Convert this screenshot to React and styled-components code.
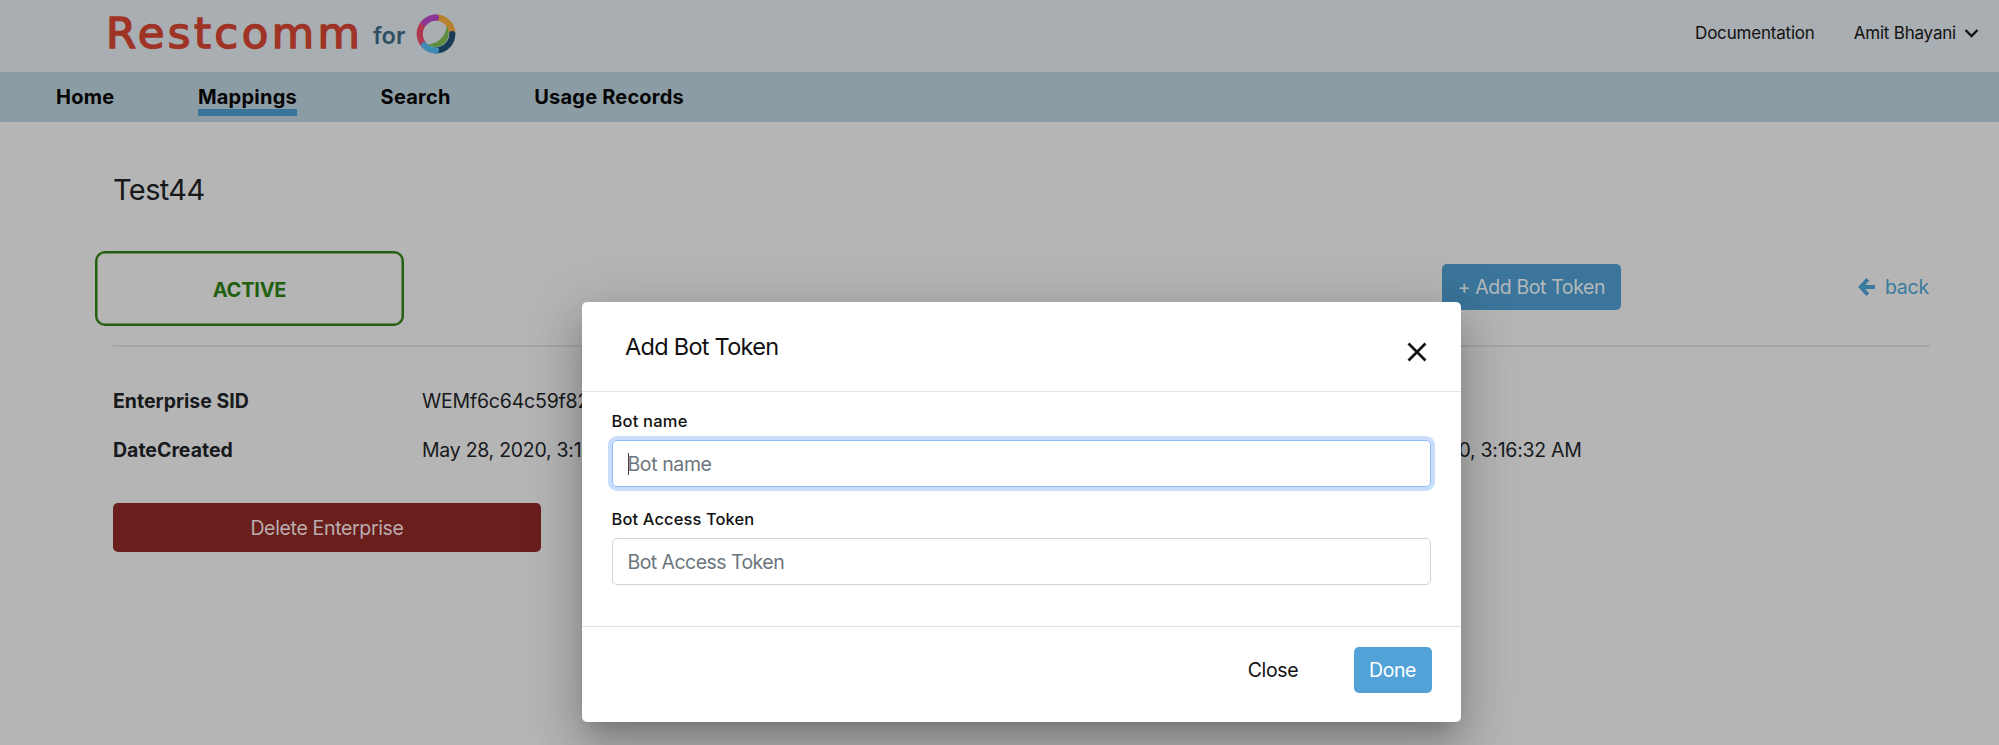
import React from 'react';
import styled, { createGlobalStyle } from 'styled-components';

const GlobalStyle = createGlobalStyle`
  * { box-sizing: border-box; }
  body { margin: 0; background: #b5b5b5; overflow: hidden; }
  button, input { font: inherit; margin: 0; }
`;

const Page = styled.div`
  position: relative;
  height: 745px;
  overflow: hidden;
  background: #b5b5b5;
  color: #17191c;
  font-family: Inter, "Liberation Sans", sans-serif;
  font-size: 19.5px;
`;

const Text = styled.span`
  white-space: nowrap;
  letter-spacing: ${(p) => p.$track || 0}px;
`;

const Header = styled.header`
  height: 72px;
  background: #a9aeb2;
  display: flex;
  align-items: flex-start;
  padding: 0 20px 0 106px;
`;

const Wordmark = styled.div`
  width: 267px;
  padding-top: 7px;
  font-family: "DejaVu Sans", sans-serif;
  font-size: 43.5px;
  line-height: 52px;
  letter-spacing: 3.4px;
  color: #9f3426;
  -webkit-text-stroke: 1.5px #9f3426;
  white-space: nowrap;
`;

const For = styled.div`
  width: 43px;
  padding-top: 22px;
  font-size: 23.5px;
  line-height: 28px;
  font-weight: 600;
  color: #2f5063;
`;

const Ring = styled.svg`
  width: 40px;
  height: 40px;
  margin-top: 14px;
`;

const UserLinks = styled.div`
  margin-left: auto;
  padding-top: 22px;
  display: flex;
  gap: 39px;
  font-size: 17px;
  line-height: 22px;
  color: #111;
`;

const User = styled.span`
  display: flex;
  align-items: center;
  gap: 8px;
`;

const Nav = styled.nav`
  height: 50px;
  background: #8c9ca4;
  display: flex;
  padding: 12px 0 0 56px;
  gap: 83.5px;
  font-size: 20px;
  font-weight: 700;
  color: #050505;
`;

const NavItem = styled.a`
  height: 32px;
  line-height: 26px;
  border-bottom: 7px solid ${(p) => (p.$active ? '#39759b' : 'transparent')};
`;

const Content = styled.main`
  padding: 50px 69px 0 113px;
`;

const Title = styled.h1`
  margin: 0;
  font-size: 29px;
  font-weight: 400;
  line-height: 36px;
`;

const Toolbar = styled.div`
  display: flex;
  align-items: flex-start;
  height: 137px;
  margin-left: -18px;
  padding: 43px 1px 0 0;
`;

const Status = styled.div`
  width: 309px;
  height: 75px;
  padding-top: 2px;
  border: 2.5px solid #22600f;
  border-radius: 10px;
  box-shadow: inset 0 0 0 0.5px #22600f;
  color: #22600f;
  font-size: 20px;
  font-weight: 700;
  display: flex;
  align-items: center;
  justify-content: center;
`;

const Button = styled.button`
  width: ${(p) => p.$w}px;
  height: ${(p) => p.$h || 46}px;
  padding: 0;
  border: 0;
  border-radius: 5px;
  background: ${(p) => p.$bg || 'transparent'};
  color: ${(p) => p.$fg};
`;

const AddSlot = styled.div`
  margin: 13px 0 0 auto;
`;

const Back = styled.a`
  display: flex;
  align-items: center;
  gap: 10px;
  height: 46px;
  margin: 13px 0 0 237px;
  color: #397a9f;
`;

const Details = styled.dl`
  margin: 0;
  padding-top: 30px;
  border-top: 2px solid #a5a6a7;
`;

const Row = styled.div`
  display: grid;
  grid-template-columns: 309px 924px auto;
  height: 49px;
  line-height: 49px;
`;

const Term = styled.dt`
  font-weight: 700;
`;

const Value = styled.dd`
  margin: 0;
`;

const DeleteSlot = styled.div`
  padding-top: 28px;
`;

const Dialog = styled.section`
  position: absolute;
  left: 582px;
  top: 302px;
  width: 879px;
  height: 420px;
  border-radius: 5px;
  background: #fff;
  color: #111;
  box-shadow: 0 13px 19px -9px rgba(0, 0, 0, 0.2), 0 29px 46px 4px rgba(0, 0, 0, 0.14),
    0 11px 56px 10px rgba(0, 0, 0, 0.12);
`;

const DialogHeader = styled.div`
  height: 90px;
  padding: 29px 34px 0 43px;
  border-bottom: 1.5px solid #e3e5e8;
  display: flex;
  justify-content: space-between;
`;

const DialogTitle = styled.h2`
  margin: 0;
  font-size: 23.5px;
  font-weight: 400;
  line-height: 32px;
`;

const CloseIcon = styled.svg`
  width: 20px;
  height: 20px;
  margin-top: 11px;
`;

const DialogBody = styled.div`
  height: 234px;
  padding: 18px 30px 0 29.5px;
`;

const Field = styled.label`
  display: block;
  height: 98px;
  font-size: 16.5px;
  font-weight: 500;
  line-height: 22px;
`;

const Input = styled.div`
  display: flex;
  align-items: center;
  height: 47px;
  margin-top: 8px;
  padding-left: 15px;
  border: 1.5px solid ${(p) => (p.$focus ? '#8fbcf8' : '#ced4da')};
  border-radius: 5px;
  box-shadow: ${(p) => (p.$focus ? '0 0 0 4px #c9ddfd' : 'none')};
  color: #6c757d;
  font-size: 19.5px;
  font-weight: 400;
`;

const Caret = styled.i`
  width: 1px;
  height: 22px;
  margin-right: -1px;
  background: #444;
`;

const DialogFooter = styled.div`
  height: 96px;
  padding: 20px 29.5px 0 0;
  border-top: 1.5px solid #dee0e3;
  display: flex;
  justify-content: flex-end;
  gap: 40px;
`;

export default function App() {
  return (
    <Page>
      <GlobalStyle />
      <Header>
        <Wordmark>Restcomm</Wordmark>
        <For>for</For>
        <Ring viewBox="0 0 40 40" fill="none" strokeWidth="6.2" strokeLinecap="round">
          <path d="M31 10C36 22 30 33 19 33C16 33 13.5 32 11.5 30.5C22 30 30.5 22 31 10Z" fill="#5e8d3e" />
          <path d="M20 3.7A16.3 16.3 0 0 1 36.3 19" stroke="#b7812f" />
          <path d="M8 31A16.3 16.3 0 0 1 8.5 8.5" stroke="#b0384f" />
          <path d="M8.5 8.5A16.3 16.3 0 0 1 20 3.7" stroke="#8b3697" />
          <path d="M36.3 20A16.3 16.3 0 0 1 20 36.3" stroke="#183c56" />
          <path d="M8.2 31.3A16.3 16.3 0 0 0 20 36.3" stroke="#3c8bb2" />
        </Ring>
        <UserLinks>
          <Text $track={-0.2}>Documentation</Text>
          <User>
            <Text $track={-0.2}>Amit Bhayani</Text>
            <svg width="15" height="10" viewBox="0 0 15 10" fill="none" stroke="#111" strokeWidth="2.3">
              <path d="M1.5 2l6 6 6-6" />
            </svg>
          </User>
        </UserLinks>
      </Header>
      <Nav>
        <NavItem><Text $track={0.25}>Home</Text></NavItem>
        <NavItem $active><Text $track={0.25}>Mappings</Text></NavItem>
        <NavItem><Text $track={0.25}>Search</Text></NavItem>
        <NavItem><Text $track={0.2}>Usage Records</Text></NavItem>
      </Nav>
      <Content>
        <Title><Text $track={-0.6}>Test44</Text></Title>
        <Toolbar>
          <Status><Text $track={-0.25}>ACTIVE</Text></Status>
          <AddSlot>
            <Button $w={179} $bg="#3b759b" $fg="#b5b9bc"><Text $track={-0.4}>+ Add Bot Token</Text></Button>
          </AddSlot>
          <Back>
            <svg width="17" height="18" viewBox="0 0 17 18" fill="none" stroke="#397a9f" strokeWidth="3.9">
              <path d="M9.8 1.4L2.8 9l7 7.6M2.8 9H17" />
            </svg>
            <Text $track={-0.2}>back</Text>
          </Back>
        </Toolbar>
        <Details>
          <Row>
            <Term><Text>Enterprise SID</Text></Term>
            <Value><Text $track={-0.2}>WEMf6c64c59f82</Text></Value>
          </Row>
          <Row>
            <Term><Text>DateCreated</Text></Term>
            <Value><Text $track={-0.27}>May 28, 2020, 3:16</Text></Value>
            <Value><Text $track={-0.27}>May 28, 2020, 3:16:32 AM</Text></Value>
          </Row>
        </Details>
        <DeleteSlot>
          <Button $w={428} $h={49} $bg="#6a1f1d" $fg="#b9adad"><Text $track={-0.34}>Delete Enterprise</Text></Button>
        </DeleteSlot>
      </Content>
      <Dialog role="dialog">
        <DialogHeader>
          <DialogTitle><Text $track={-0.72}>Add Bot Token</Text></DialogTitle>
          <CloseIcon viewBox="0 0 20 20" stroke="#111" strokeWidth="2.7">
            <path d="M1.5 1.5l17 17M18.5 1.5l-17 17" />
          </CloseIcon>
        </DialogHeader>
        <DialogBody>
          <Field>
            <Text $track={0.2}>Bot name</Text>
            <Input $focus><Caret /><Text $track={-0.4}>Bot name</Text></Input>
          </Field>
          <Field>
            <Text $track={0.1}>Bot Access Token</Text>
            <Input><Text $track={-0.55}>Bot Access Token</Text></Input>
          </Field>
        </DialogBody>
        <DialogFooter>
          <Button $w={81} $fg="#111"><Text $track={-0.35}>Close</Text></Button>
          <Button $w={78} $bg="#52a2d8" $fg="#fff"><Text $track={-0.4}>Done</Text></Button>
        </DialogFooter>
      </Dialog>
    </Page>
  );
}
